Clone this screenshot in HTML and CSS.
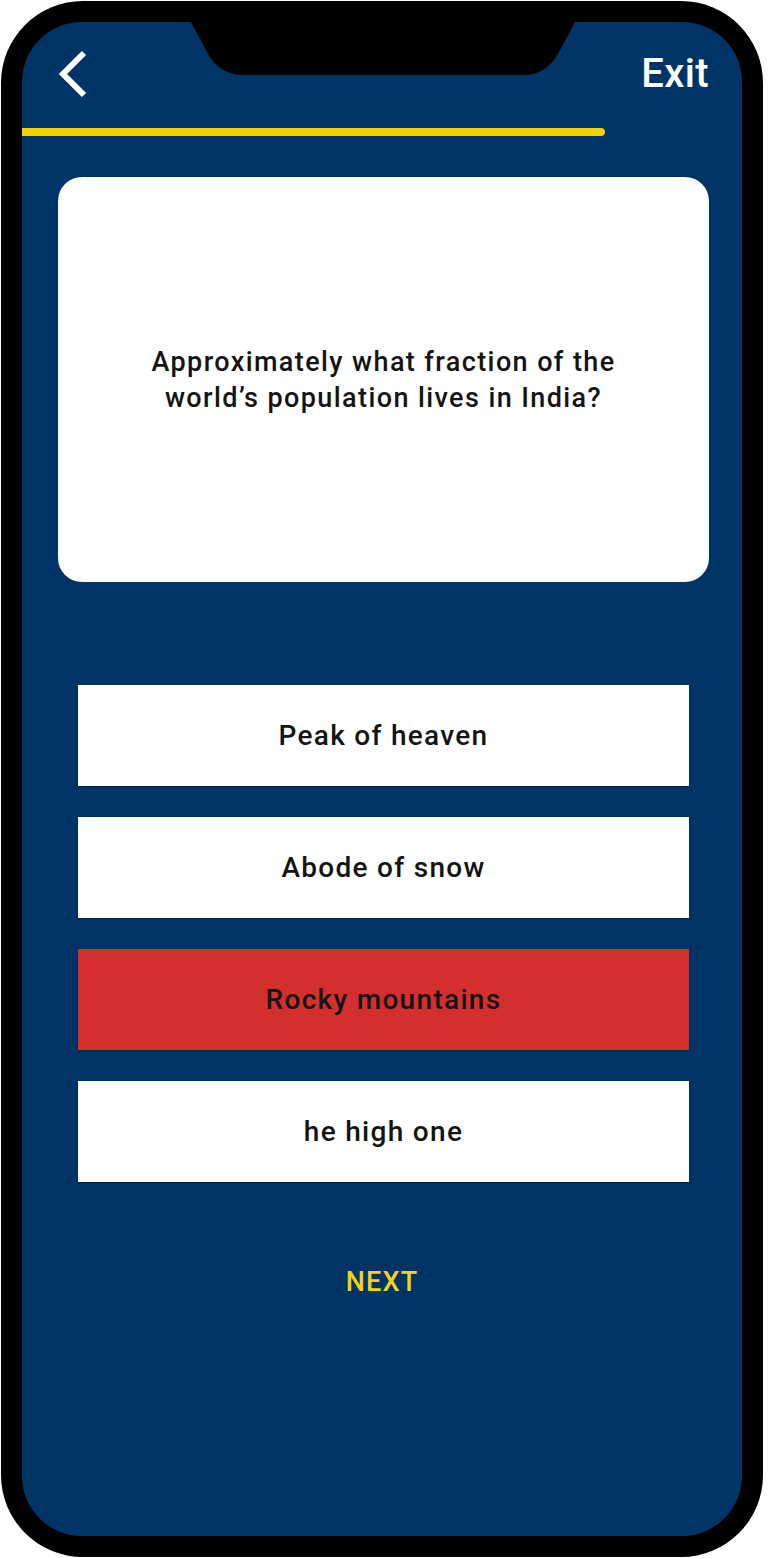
FILE: index.html
```html
<!DOCTYPE html>
<html lang="en">
<head>
<meta charset="utf-8">
<title>Quiz</title>
<link rel="stylesheet" href="styles.css">
</head>
<body>
<div class="phone">
  <div class="screen">
    <svg class="notch" width="384" height="54" viewBox="0 0 384 54" aria-hidden="true">
      <path d="M0 0 H384 L368 30 Q356 53 332 53 H52 Q28 53 16 30 Z" fill="#000"/>
    </svg>
    <header class="header">
      <svg class="back" width="34" height="52" viewBox="0 0 34 52" aria-label="Back">
        <polyline points="28,5 7,26 28,47" fill="none" stroke="#fff" stroke-width="6" stroke-linejoin="miter"/>
      </svg>
      <span class="exit">Exit</span>
    </header>
    <div class="progress"></div>
    <section class="card">
      <p class="question">Approximately what fraction of the<br>world’s population lives in India?</p>
    </section>
    <div class="answers">
      <div class="answer">Peak of heaven</div>
      <div class="answer">Abode of snow</div>
      <div class="answer answer--wrong">Rocky mountains</div>
      <div class="answer">he high one</div>
    </div>
    <div class="next">NEXT</div>
  </div>
</div>
</body>
</html>
```

FILE: styles.css
```css
* { box-sizing: border-box; }
html, body { margin: 0; padding: 0; background: #fff; }
body { font-family: Roboto, "Liberation Sans", Arial, sans-serif; }

.phone {
  margin: 1px 0 0 1px;
  width: 762px;
  height: 1556px;
  background: #000;
  border-radius: 82px;
  padding: 21px;
}

.screen {
  position: relative;
  height: 100%;
  background: #003466;
  border-radius: 60px;
  overflow: hidden;
  display: flex;
  flex-direction: column;
}

.notch {
  position: absolute;
  top: 0;
  left: 169px;
}

.header {
  height: 106px;
  display: flex;
  justify-content: space-between;
  align-items: flex-start;
  padding: 0 33px 0 34px;
}

.back { margin-top: 26px; display: block; }

.exit {
  margin-top: 32px;
  color: #fff;
  font-size: 40px;
  line-height: 40px;
  font-weight: 500;
  letter-spacing: 0.4px;
}

.progress {
  width: 583px;
  height: 8px;
  background: #f4d200;
  border-radius: 0 4px 4px 0;
}

.card {
  margin: 41px 33px 0 36px;
  height: 405px;
  background: #fff;
  border-radius: 24px;
  display: flex;
  align-items: center;
  justify-content: center;
}

.question {
  margin: 0;
  font-size: 27px;
  line-height: 36px;
  font-weight: 500;
  letter-spacing: 1.4px;
  color: #141414;
  text-align: center;
}

.answers {
  margin: 103px 53px 0 56px;
  display: flex;
  flex-direction: column;
  gap: 31px;
}

.answer {
  height: 101px;
  background: #fff;
  display: flex;
  align-items: center;
  justify-content: center;
  font-size: 28px;
  font-weight: 500;
  letter-spacing: 1.3px;
  color: #141414;
  box-shadow: 0 1px 2px rgba(0, 0, 0, 0.35);
}

.answer--wrong { background: #d32f2f; }

.next {
  margin-top: 85px;
  text-align: center;
  color: #f4d21a;
  font-size: 27px;
  line-height: 30px;
  font-weight: 500;
  letter-spacing: 1.2px;
}
```
